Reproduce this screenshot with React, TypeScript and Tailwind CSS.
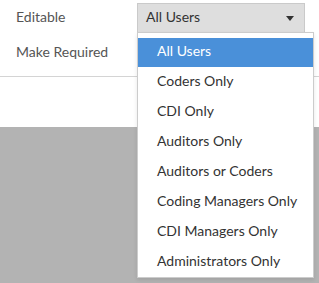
import React from "react";

const options = [
    "All Users",
    "Coders Only",
    "CDI Only",
    "Auditors Only",
    "Auditors or Coders",
    "Coding Managers Only",
    "CDI Managers Only",
    "Administrators Only",
];

export default function App() {
    return (
        <div className="relative h-[283px] w-[319px] overflow-hidden bg-white font-['Lato','Liberation_Sans',sans-serif] text-[14px]">
            <div className="flex h-[127px] flex-col">
                <div className="h-[77px] border-b border-[#d4d4d4] pt-[3px]">
                    <div className="flex h-[30px] items-center">
                        <span className="w-[137px] pb-[3px] pl-[16px] text-[#555]">Editable</span>
                        <div className="flex h-[30px] w-[168px] items-center justify-between border border-[#cacaca] bg-[#dedede] pb-[3px] pl-[8px] pr-[10px] text-[#333]">
                            <span>All Users</span>
                            <svg width="8" height="5" viewBox="0 0 8 5" className="mt-[3px]">
                                <path d="M0 0h8L4 5z" fill="#333" />
                            </svg>
                        </div>
                    </div>
                    <div className="flex h-[36px] items-center">
                        <span className="pl-[16px] text-[#555]">Make Required</span>
                    </div>
                </div>
            </div>
            <div className="h-[156px] bg-[#b3b3b3]" />

            {/* open menu of the select, lies over the page */}
            <div className="absolute left-[137px] top-[32px] w-[177px] border border-[#cccccc] bg-white pt-[5px] shadow-[0_2px_4px_rgba(0,0,0,0.1)]">
                {options.map((opt, i) => (
                    <div
                        key={opt}
                        className={`flex items-center pb-[4px] pl-[19px] ${i === 0 ? "h-[29px] bg-[#4a90d9] text-white" : "h-[30px] text-[#333]"}`}
                    >
                        {opt}
                    </div>
                ))}
            </div>
        </div>
    );
}
